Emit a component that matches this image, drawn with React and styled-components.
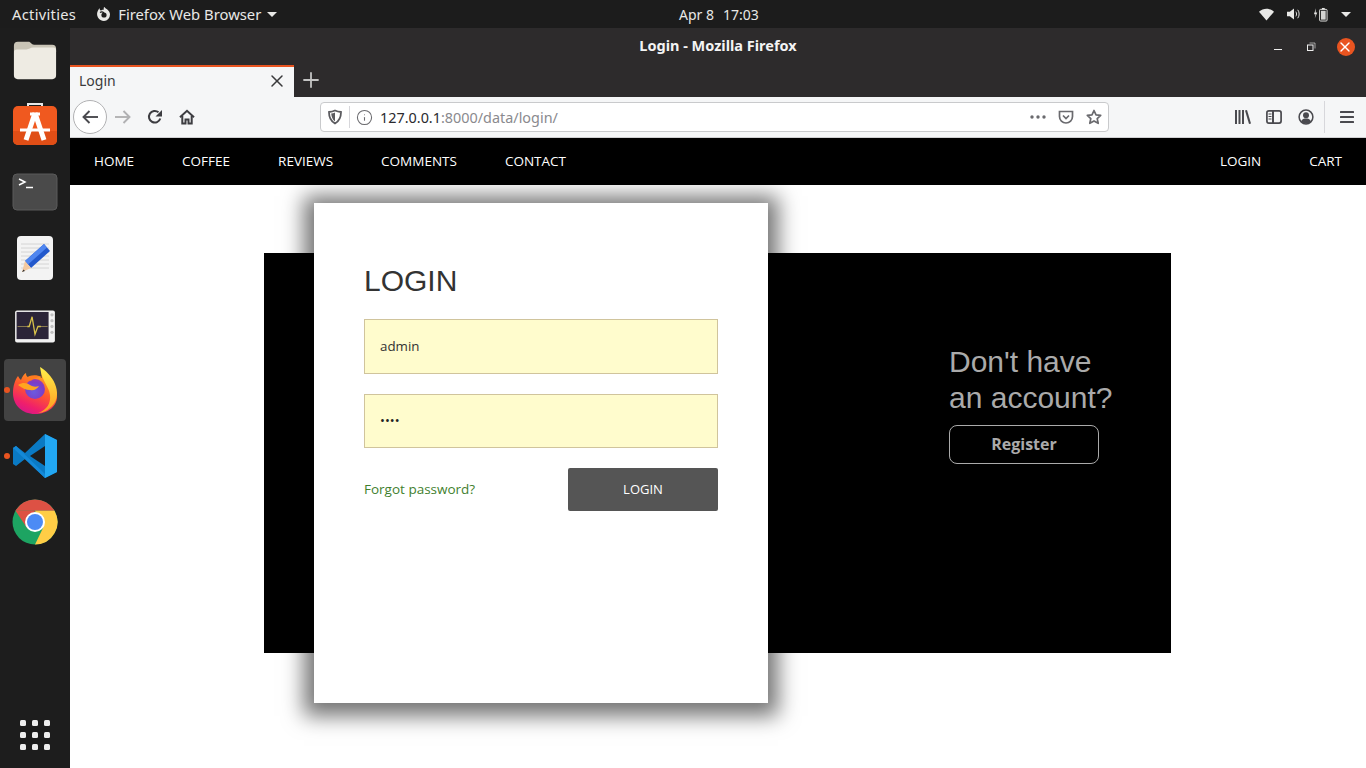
import React from 'react';
import styled, { createGlobalStyle } from 'styled-components';
import { X, Plus, Info } from 'lucide-react';

const GlobalStyle = createGlobalStyle`
  html, body {
    margin: 0;
    padding: 0;
    height: 100%;
    overflow: hidden;
    background: #fff;
  }
  * {
    box-sizing: border-box;
  }
`;

const ui = `"Noto Sans", "Open Sans", sans-serif`;

const Screen = styled.div`
  width: 1366px;
  height: 768px;
  display: flex;
  flex-direction: column;
  font-family: ${ui};
`;

const TopBar = styled.header`
  height: 28px;
  flex: none;
  display: grid;
  grid-template-columns: 667px auto 1fr;
  align-items: center;
  background: #1c1c1c;
  color: #e8e8e6;
  font-size: 14.7px;
  padding: 0 15px 0 12px;
`;

const TopLeft = styled.div`
  display: flex;
  align-items: center;
  gap: 20px;
`;

const Activities = styled.span`
  letter-spacing: 0.3px;
`;

const AppMenu = styled.div`
  display: flex;
  align-items: center;
  gap: 6px;
  font-size: 14.8px;
`;

const Caret = styled.span`
  display: inline-block;
  border-left: 5px solid transparent;
  border-right: 5px solid transparent;
  border-top: 5px solid #e8e8e6;
`;

const Clock = styled.div`
  display: flex;
  gap: 9px;
  font-size: 14px;
`;

const Tray = styled.div`
  display: flex;
  align-items: center;
  justify-content: flex-end;
  gap: 13px;
`;

const Main = styled.div`
  flex: 1;
  display: flex;
  min-height: 0;
`;

const Dock = styled.nav`
  width: 70px;
  flex: none;
  background: #1d1d1d;
  display: flex;
  flex-direction: column;
  align-items: center;
  padding-top: 1px;
  gap: 4px;
`;

const DockTile = styled.div`
  position: relative;
  width: 62px;
  height: 62px;
  display: flex;
  align-items: center;
  justify-content: center;
  border-radius: 4px;
  background: ${(p) => (p.$active ? '#434343' : 'transparent')};
`;

const RunDot = styled.span`
  position: absolute;
  left: 0;
  top: 28px;
  width: 6px;
  height: 6px;
  border-radius: 50%;
  background: #e95420;
`;

const AppGrid = styled.div`
  margin-top: auto;
  margin-bottom: 18px;
  display: grid;
  grid-template-columns: repeat(3, 6px);
  gap: 6px;
  i {
    display: block;
    width: 6px;
    height: 6px;
    border-radius: 1.5px;
    background: #f0f0f0;
  }
`;

const Browser = styled.div`
  flex: 1;
  min-width: 0;
  display: flex;
  flex-direction: column;
`;

const TitleBar = styled.div`
  height: 37px;
  flex: none;
  background: #2d2b2c;
  display: grid;
  grid-template-columns: 1fr auto 1fr;
  align-items: center;
  color: #f4f4f4;
  font-size: 14.5px;
  font-weight: 700;
`;

const WindowTitle = styled.span`
  grid-column: 2;
  margin-bottom: 3px;
`;

const WindowControls = styled.div`
  grid-column: 3;
  display: flex;
  justify-content: flex-end;
  align-items: center;
  padding-right: 11px;
  gap: 21px;
  svg:first-child {
    margin-right: 2px;
  }
`;

const CloseCircle = styled.span`
  width: 18px;
  height: 18px;
  border-radius: 50%;
  background: #e95420;
  display: flex;
  align-items: center;
  justify-content: center;
`;

const TabStrip = styled.div`
  height: 32px;
  flex: none;
  background: #2d2b2c;
  display: flex;
  align-items: center;
`;

const Tab = styled.div`
  width: 224px;
  height: 32px;
  background: #f5f6f7;
  border-top: 2px solid #e95420;
  display: flex;
  align-items: center;
  justify-content: space-between;
  padding: 0 7px 2px 9px;
  color: #3a3a3c;
  font-size: 14px;
`;

const TabLabel = styled.span`
  margin-bottom: 2px;
`;

const NewTab = styled.div`
  width: 34px;
  display: flex;
  justify-content: center;
  padding-bottom: 2px;
  color: #c4c4c4;
`;

const Toolbar = styled.div`
  height: 41px;
  flex: none;
  background: #f5f6f7;
  border-bottom: 1px solid #d0d0d2;
  display: flex;
  align-items: center;
  padding-left: 3px;
`;

const ToolButton = styled.div`
  width: ${(p) => p.$w || 32}px;
  height: 32px;
  flex: none;
  display: flex;
  align-items: center;
  justify-content: center;
`;

const BackButton = styled.div`
  width: 34px;
  height: 34px;
  flex: none;
  border-radius: 50%;
  background: #fff;
  border: 1px solid #b1b1b3;
  display: flex;
  align-items: center;
  justify-content: center;
`;

const UrlBar = styled.div`
  width: 789px;
  height: 30px;
  flex: none;
  margin-left: 117px;
  margin-right: 118px;
  background: #fff;
  border: 1px solid #c9cacc;
  border-radius: 4px;
  display: flex;
  align-items: center;
  padding-left: 6px;
`;

const UrlDivider = styled.span`
  width: 1px;
  height: 22px;
  background: #d7d7db;
  margin: 0 6px;
`;

const UrlText = styled.div`
  flex: 1;
  margin-left: 7px;
  font-size: 14.4px;
  color: #8a8a8e;
  b {
    font-weight: 400;
    color: #2a2a2e;
  }
`;

const ToolDivider = styled.span`
  width: 1px;
  height: 32px;
  background: #d7d7db;
  margin: 0 6px 0 2px;
`;

const Page = styled.main`
  flex: 1;
  min-height: 0;
  background: #fff;
  font-family: "Open Sans", "Noto Sans", sans-serif;
`;

const SiteNav = styled.nav`
  height: 47px;
  padding-bottom: 2px;
  background: #000;
  display: flex;
  align-items: center;
  justify-content: space-between;
`;

const NavGroup = styled.ul`
  list-style: none;
  margin: 0;
  padding: 0;
  display: flex;
`;

const NavItem = styled.li`
  padding: 0 24px;
  color: #fff;
  font-size: 13.5px;
  text-transform: uppercase;
`;

const Banner = styled.section`
  width: 907px;
  height: 400px;
  margin: 68px 0 0 194px;
  background: #000;
  display: flex;
  align-items: center;
`;

const Card = styled.div`
  width: 454px;
  height: 500px;
  flex: none;
  margin-left: 50px;
  background: #fff;
  box-shadow: 0 3px 20px 10px rgba(0, 0, 0, 0.55);
  padding: 60px 50px;
`;

const CardTitle = styled.h2`
  margin: 0 0 20px;
  font: 400 30px/36px "Liberation Sans", Arial, sans-serif;
  color: #333;
`;

const Field = styled.div`
  height: ${(p) => p.$h}px;
  margin-bottom: 20px;
  background: #fffccd;
  border: 1px solid #d0c49c;
  display: flex;
  align-items: center;
  padding: 0 15px 2px;
  font-size: 13.33px;
  color: #333;
`;

const Dots = styled.span`
  font-size: 13px;
  color: #222;
`;

const FormFooter = styled.div`
  display: flex;
  align-items: center;
  justify-content: space-between;
`;

const Forgot = styled.a`
  color: #3f7f2e;
  font-size: 13.5px;
  margin-bottom: 2px;
`;

const LoginButton = styled.div`
  width: 150px;
  height: 43px;
  padding-bottom: 2px;
  background: #555;
  border-radius: 2px;
  color: #fff;
  font-size: 13px;
  display: flex;
  align-items: center;
  justify-content: center;
`;

const SignUp = styled.div`
  align-self: flex-start;
  margin-left: 181px;
  margin-top: 91px;
  color: #aaa;
`;

const SignUpTitle = styled.h3`
  margin: 0 0 9px;
  font: 400 30px/36px "Liberation Sans", Arial, sans-serif;
`;

const RegisterButton = styled.div`
  width: 150px;
  height: 39px;
  padding-bottom: 2px;
  border: 1px solid #aaa;
  border-radius: 8px;
  font-size: 16px;
  font-weight: 700;
  display: flex;
  align-items: center;
  justify-content: center;
`;

const Lifted = styled.svg`
  margin-top: ${(p) => p.$shift || 0}px;
`;

function FolderIcon() {
  return (
    <svg width="46" height="44" viewBox="0 0 48 44">
      <path d="M2 7a4 4 0 0 1 4-4h11c3 0 3 3 6 3h19a4 4 0 0 1 4 4v4H2z" fill="#c9c4b6" />
      <path d="M2 14c0-2 1-3 3-3h10c3 0 4-2 7-2h21c2 0 3 1 3 3v26a4 4 0 0 1-4 4H6a4 4 0 0 1-4-4z" fill="#eeebe3" />
    </svg>
  );
}

function StoreIcon() {
  return (
    <Lifted $shift={-4} width="44" height="42" viewBox="0 0 44 42">
      <path d="M15 4V1h14v3" fill="none" stroke="#e8e8e8" strokeWidth="2" />
      <rect x="0" y="3" width="44" height="39" rx="5" fill="#f0591f" />
      <path d="M0 28h44v9a5 5 0 0 1-5 5H5a5 5 0 0 1-5-5z" fill="#e04e16" />
      <path d="M22 10l-9 27M22 10l9 27" stroke="#fff" strokeWidth="5" fill="none" />
      <path d="M17 11h10" stroke="#fff" strokeWidth="3" />
      <path d="M7 27h30" stroke="#fff" strokeWidth="3" />
    </Lifted>
  );
}

function TerminalIcon() {
  return (
    <svg width="46" height="38" viewBox="0 0 46 38">
      <rect x="1" y="1" width="44" height="36" rx="4" fill="#4a4a4a" stroke="#5a5a5a" />
      <path d="M7 6l6 3-6 3" fill="none" stroke="#fff" strokeWidth="1.500" />
      <path d="M14 14.500h7" stroke="#fff" strokeWidth="1.500" />
    </svg>
  );
}

function EditorIcon() {
  return (
    <svg width="38" height="46" viewBox="0 0 38 46">
      <rect x="1" y="1" width="36" height="44" rx="4" fill="#f3f3f3" />
      <path d="M5 9h28M5 13h28M5 17h28M5 21h28M5 25h28M5 29h28M5 33h28" stroke="#d4d4d4" />
      <path d="M28 9l6 7-19 17-6-7z" fill="#2258cc" />
      <path d="M28 9l3 3.500-19 17-3-3.500z" fill="#4f86f0" />
      <path d="M9 26l6 7-9 4z" fill="#f3c9a0" />
      <path d="M7.500 34.500l-1.500 2.500 3-1z" fill="#333" />
    </svg>
  );
}

function MonitorIcon() {
  return (
    <Lifted $shift={4} width="42" height="33" viewBox="0 0 42 34">
      <rect x="0.500" y="0.500" width="41" height="33" rx="2" fill="#f2f2f2" />
      <rect x="2" y="2" width="33" height="28" fill="#2b2438" />
      <path d="M3 17h10M26 17h8" stroke="#8a7a50" strokeWidth="1.200" />
      <path d="M13 17l2 0 3-10 3 18 3-8h3" fill="none" stroke="#d9c24a" strokeWidth="1.300" />
      <g fill="#c0c0c0">
        <circle cx="38.500" cy="5" r="1.700" />
        <circle cx="38.500" cy="11" r="1.700" />
        <circle cx="38.500" cy="17" r="1.700" />
        <circle cx="38.500" cy="23" r="1.700" />
      </g>
    </Lifted>
  );
}

function FirefoxIcon() {
  return (
    <svg width="46" height="48" viewBox="0 0 46 48">
      <defs>
        <linearGradient id="fxBody" x1="0.700" y1="0.100" x2="0.300" y2="1">
          <stop offset="0" stopColor="#ffb21f" />
          <stop offset="0.450" stopColor="#ff5a2c" />
          <stop offset="0.800" stopColor="#f0206a" />
          <stop offset="1" stopColor="#d8168a" />
        </linearGradient>
        <linearGradient id="fxTail" x1="0.500" y1="0" x2="0.500" y2="1">
          <stop offset="0" stopColor="#fff04a" />
          <stop offset="1" stopColor="#ff9a1f" />
        </linearGradient>
        <radialGradient id="fxGlobe" cx="0.450" cy="0.650" r="0.700">
          <stop offset="0" stopColor="#6a5be0" />
          <stop offset="0.700" stopColor="#7a3dc8" />
          <stop offset="1" stopColor="#a03aa8" />
        </radialGradient>
      </defs>
      <path d="M30 1c-1 6 1 9 5 13 5 5 9 9 10 15 1 11-9 19-22 19S1 39 1 27C1 20 3 14 6 10c1 2 2 3 3 4 1-3 3-6 5-7 0 3 1 4 4 5 4-2 9-2 12 0-1-4-1-8 0-11z" fill="url(#fxBody)" />
      <path d="M28 1c5 3 12 9 15 17 3 7 3 15-2 21-4 5-10 8-15 8 9-3 13-10 12-18-1-9-8-13-10-28z" fill="url(#fxTail)" />
      <circle cx="23" cy="23" r="10" fill="url(#fxGlobe)" />
      <path d="M6 19c5-3 9-2 12 0 3 2 6 2 9 1-2 3-5 5-9 4-4 0-8-2-12-5z" fill="#ffa51f" />
      <path d="M14 12c3-3 10-4 16-1-4 0-9 1-11 4z" fill="#ff7a1f" />
    </svg>
  );
}

function CodeIcon() {
  return (
    <svg width="44" height="44" viewBox="0 0 44 44">
      <path d="M32 0l12 6v32l-12 6-20-19-9 7-3-2v-16l3-2 9 7z" fill="#0a7ac4" />
      <path d="M32 0l12 6v32l-12 6z" fill="#22a7f2" />
      <path d="M32 12L17 22l15 10z" fill="#1d1d1d" />
      <path d="M0 14l3-2 29 28v4z" fill="#1489d8" />
    </svg>
  );
}

function ChromeIcon() {
  return (
    <svg width="46" height="46" viewBox="-23 -23 46 46">
      <circle r="22.500" fill="#1da462" />
      <path d="M-19.500-11.250A22.500 22.500 0 0 1 19.500-11.250H0z" fill="#dd5144" />
      <path d="M-19.500-11.250L-8 6 0-11.250z" fill="#dd5144" />
      <path d="M19.500-11.250A22.500 22.500 0 0 1 0 22.500L8 6 0-11.250z" fill="#ffcd46" />
      <circle r="10" fill="#fff" />
      <circle r="8" fill="#4c8bf5" />
    </svg>
  );
}

function ArrowIcon({ flip, color }) {
  return (
    <svg width="18" height="16" viewBox="0 0 18 16" fill="none" stroke={color} strokeWidth="1.900" transform={flip ? 'scale(-1 1)' : undefined}>
      <path d="M17 8H2.500" />
      <path d="M8.500 2L2.500 8l6 6" />
    </svg>
  );
}

function ReloadIcon() {
  return (
    <svg width="16" height="16" viewBox="0 0 16 16">
      <path d="M13.300 9.500A5.800 5.800 0 1 1 11.500 3.300" fill="none" stroke="#3d3d41" strokeWidth="2" />
      <path d="M15 1v6.500H8.500z" fill="#3d3d41" />
    </svg>
  );
}

function ShieldIcon({ color = '#5a5a5e' }) {
  return (
    <svg width="16" height="16" viewBox="0 0 16 16">
      <path d="M8 1.500c2 1 4 1.400 6 1.500 0 5-1.500 9-6 11.500C3.500 12 2 8 2 3c2-.1 4-.5 6-1.500z" fill="none" stroke={color} strokeWidth="1.800" />
      <path d="M8 3.500v9c-2.500-2-3.500-4.500-3.800-8 1.400-.1 2.600-.5 3.800-1z" fill={color} />
    </svg>
  );
}

function HomeIcon() {
  return (
    <svg width="16" height="16" viewBox="0 0 16 16" fill="none" stroke="#3d3d41" strokeWidth="2">
      <path d="M1 8.300L8 1.800l7 6.500" />
      <path d="M3.300 7v7.500h3.200v-4h3v4h3.200V7" />
    </svg>
  );
}

function DotsIcon() {
  return (
    <svg width="16" height="4" viewBox="0 0 16 4" fill="#6a6a6e">
      <circle cx="2" cy="2" r="1.700" />
      <circle cx="8" cy="2" r="1.700" />
      <circle cx="14" cy="2" r="1.700" />
    </svg>
  );
}

function PocketIcon() {
  return (
    <svg width="16" height="15" viewBox="0 0 16 15" fill="none" stroke="#6a6a6e" strokeWidth="1.700">
      <path d="M1.500 1.500h13v5a6.500 6.500 0 0 1-13 0z" />
      <path d="M5 5.500l3 3 3-3" />
    </svg>
  );
}

function StarIcon() {
  return (
    <svg width="16" height="16" viewBox="0 0 16 16" fill="none" stroke="#6a6a6e" strokeWidth="1.700" strokeLinejoin="round">
      <path d="M8 1.500l2 4.400 4.700.5-3.500 3.200 1 4.700L8 11.900l-4.200 2.400 1-4.700L1.300 6.400 6 5.900z" />
    </svg>
  );
}

function LibraryIcon() {
  return (
    <svg width="16" height="14" viewBox="0 0 16 14" fill="#4a4a4f">
      <rect x="0" y="0" width="2" height="14" />
      <rect x="3.500" y="0" width="2" height="14" />
      <rect x="7" y="0" width="2" height="14" />
      <path d="M10 .5l2-.5 4 13.500-2 .5z" />
    </svg>
  );
}

function SidebarIcon() {
  return (
    <svg width="16" height="14" viewBox="0 0 16 14" fill="none" stroke="#4a4a4f">
      <rect x="0.900" y="0.900" width="14.200" height="12.200" rx="2" strokeWidth="1.700" />
      <path d="M7 1v12" strokeWidth="2" />
      <path d="M2.500 4h3M2.500 6.500h3M2.500 9h3" />
    </svg>
  );
}

function AccountIcon() {
  return (
    <svg width="16" height="16" viewBox="0 0 16 16">
      <circle cx="8" cy="8" r="6.900" fill="none" stroke="#4a4a4f" strokeWidth="1.500" />
      <circle cx="8" cy="6.300" r="3" fill="#4a4a4f" />
      <path d="M3 12.500c1-2.500 3-3 5-3s4 .5 5 3c-1.300 1.300-3 2-5 2s-3.700-.7-5-2z" fill="#4a4a4f" />
    </svg>
  );
}

function MenuIcon() {
  return (
    <svg width="14" height="12" viewBox="0 0 14 12" fill="#4a4a4f">
      <rect y="0" width="14" height="2" rx="0.500" />
      <rect y="5" width="14" height="2" rx="0.500" />
      <rect y="10" width="14" height="2" rx="0.500" />
    </svg>
  );
}

function FirefoxGlyph() {
  return (
    <svg width="16" height="16" viewBox="0 0 16 16">
      <path d="M8 15A7 7 0 0 1 2 4.500L3.500 2c0 1.500.5 2.200 1.500 2.500C6 3.800 7 3.500 8 3.500 7.500 2.500 7.500 1.500 8.500 1c1 2 5.500 3 5.500 7.500A6.500 6.500 0 0 1 8 15z" fill="#e8e8e6" />
      <circle cx="8" cy="9" r="2.600" fill="#1c1c1c" />
      <path d="M4 6.500c1.500-1 3-.5 4 .5" stroke="#1c1c1c" strokeWidth="1.200" fill="none" />
    </svg>
  );
}

function WifiIcon() {
  return (
    <svg width="15" height="13" viewBox="0 0 16 13" fill="#e8e8e6">
      <path d="M0 3.500C4.500-.8 11.500-.8 16 3.500L8 13z" />
    </svg>
  );
}

function VolumeIcon() {
  return (
    <svg width="14" height="14" viewBox="0 0 15 14" fill="none">
      <path d="M0 4.500h3L7.500 1v12L3 9.500H0z" fill="#e8e8e6" />
      <path d="M9.500 4.500c1 1.500 1 3.500 0 5M11.500 2.500c2 2.500 2 6.500 0 9" stroke="#e8e8e6" />
    </svg>
  );
}

function BatteryIcon() {
  return (
    <svg width="14" height="15" viewBox="0 0 15 15" fill="none">
      <path d="M3.500 1L1 8h2l-1 5 3-7H3z" fill="#e8e8e6" transform="translate(-1 0) scale(0.9)" />
      <rect x="6" y="2" width="8" height="12.500" rx="1" stroke="#e8e8e6" fill="none" />
      <rect x="7.500" y="3.500" width="5" height="9.500" fill="#e8e8e6" opacity="0.9" />
      <rect x="8.500" y="0.500" width="3" height="1.500" fill="#e8e8e6" />
    </svg>
  );
}

function MinimizeIcon() {
  return (
    <svg width="10" height="10" viewBox="0 0 10 10">
      <rect x="1" y="7" width="8" height="1" fill="#eee" />
    </svg>
  );
}

function RestoreIcon() {
  return (
    <svg width="10" height="10" viewBox="0 0 10 10" fill="none" stroke="#eee">
      <rect x="1.500" y="3" width="5.500" height="5.500" />
      <path d="M3.500 1h5.500v5.500" strokeOpacity="0.6" />
    </svg>
  );
}

const dockApps = [
  { id: 'files', icon: <FolderIcon /> },
  { id: 'store', icon: <StoreIcon /> },
  { id: 'terminal', icon: <TerminalIcon /> },
  { id: 'editor', icon: <EditorIcon /> },
  { id: 'monitor', icon: <MonitorIcon /> },
  { id: 'firefox', icon: <FirefoxIcon />, active: true, running: true },
  { id: 'code', icon: <CodeIcon />, running: true },
  { id: 'chrome', icon: <ChromeIcon /> }
];

const leftLinks = ['Home', 'Coffee', 'Reviews', 'Comments', 'Contact'];
const rightLinks = ['Login', 'Cart'];

export default function App() {
  return (
    <Screen>
      <GlobalStyle />
      <TopBar>
        <TopLeft>
          <Activities>Activities</Activities>
          <AppMenu>
            <FirefoxGlyph />
            <span>Firefox Web Browser</span>
            <Caret />
          </AppMenu>
        </TopLeft>
        <Clock>
          <span>Apr 8</span>
          <span>17:03</span>
        </Clock>
        <Tray>
          <WifiIcon />
          <VolumeIcon />
          <BatteryIcon />
          <Caret />
        </Tray>
      </TopBar>
      <Main>
        <Dock>
          {dockApps.map((app) => (
            <DockTile key={app.id} $active={app.active}>
              {app.running && <RunDot />}
              {app.icon}
            </DockTile>
          ))}
          <AppGrid>
            {Array.from({ length: 9 }, (_, i) => (
              <i key={i} />
            ))}
          </AppGrid>
        </Dock>
        <Browser>
          <TitleBar>
            <WindowTitle>Login - Mozilla Firefox</WindowTitle>
            <WindowControls>
              <MinimizeIcon />
              <RestoreIcon />
              <CloseCircle>
                <X size={16} color="#fff" strokeWidth={2} />
              </CloseCircle>
            </WindowControls>
          </TitleBar>
          <TabStrip>
            <Tab>
              <TabLabel>Login</TabLabel>
              <X size={20} color="#3a3a3c" strokeWidth={1.8} />
            </Tab>
            <NewTab>
              <Plus size={24} strokeWidth={1.8} />
            </NewTab>
          </TabStrip>
          <Toolbar>
            <BackButton>
              <ArrowIcon color="#4a4a4f" />
            </BackButton>
            <ToolButton>
              <ArrowIcon flip color="#b1b1b3" />
            </ToolButton>
            <ToolButton>
              <ReloadIcon />
            </ToolButton>
            <ToolButton>
              <HomeIcon />
            </ToolButton>
            <UrlBar>
              <ShieldIcon />
              <UrlDivider />
              <Info size={17} color="#6a6a6e" strokeWidth={1.5} />
              <UrlText>
                <b>127.0.0.1</b>:8000/data/login/
              </UrlText>
              <ToolButton $w={28}>
                <DotsIcon />
              </ToolButton>
              <ToolButton $w={28}>
                <PocketIcon />
              </ToolButton>
              <ToolButton $w={28}>
                <StarIcon />
              </ToolButton>
            </UrlBar>
            <ToolButton>
              <LibraryIcon />
            </ToolButton>
            <ToolButton $w={30}>
              <SidebarIcon />
            </ToolButton>
            <ToolButton $w={33}>
              <AccountIcon />
            </ToolButton>
            <ToolDivider />
            <ToolButton>
              <MenuIcon />
            </ToolButton>
          </Toolbar>
          <Page>
            <SiteNav>
              <NavGroup>
                {leftLinks.map((link) => (
                  <NavItem key={link}>{link}</NavItem>
                ))}
              </NavGroup>
              <NavGroup>
                {rightLinks.map((link) => (
                  <NavItem key={link}>{link}</NavItem>
                ))}
              </NavGroup>
            </SiteNav>
            <Banner>
              <Card>
                <CardTitle>LOGIN</CardTitle>
                <Field $h={55}>admin</Field>
                <Field $h={54}>
                  <Dots>••••</Dots>
                </Field>
                <FormFooter>
                  <Forgot>Forgot password?</Forgot>
                  <LoginButton>LOGIN</LoginButton>
                </FormFooter>
              </Card>
              <SignUp>
                <SignUpTitle>
                  Don't have
                  <br />
                  an account?
                </SignUpTitle>
                <RegisterButton>Register</RegisterButton>
              </SignUp>
            </Banner>
          </Page>
        </Browser>
      </Main>
    </Screen>
  );
}
